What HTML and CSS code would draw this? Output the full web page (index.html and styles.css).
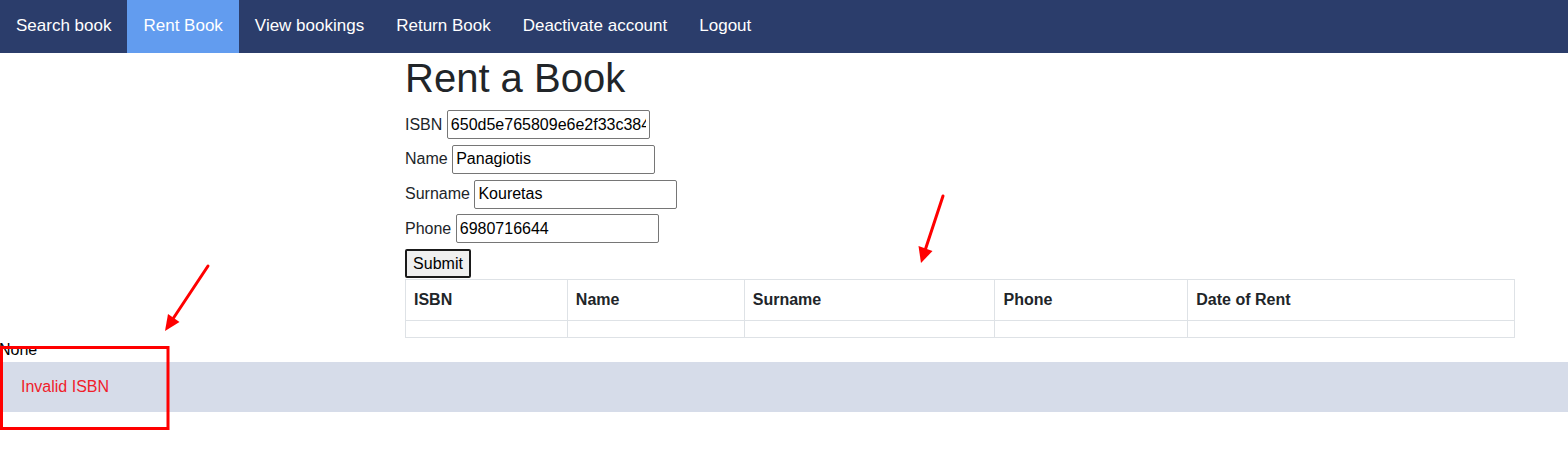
FILE: index.html
```html
<!DOCTYPE html>
<html>
<head>
<meta charset="utf-8">
<title>Rent a Book</title>
<link rel="stylesheet" href="styles.css">
</head>
<body>
<nav class="topnav">
  <a class="nav-link" href="#">Search book</a>
  <a class="nav-link active" href="#">Rent Book</a>
  <a class="nav-link" href="#">View bookings</a>
  <a class="nav-link" href="#">Return Book</a>
  <a class="nav-link" href="#">Deactivate account</a>
  <a class="nav-link" href="#">Logout</a>
</nav>
<main class="content">
  <h1 class="title">Rent a Book</h1>
  <form class="rent-form">
    <div class="field"><label>ISBN</label><input class="input" type="text" value="650d5e765809e6e2f33c384a"></div>
    <div class="field"><label>Name</label><input class="input" type="text" value="Panagiotis"></div>
    <div class="field"><label>Surname</label><input class="input" type="text" value="Kouretas"></div>
    <div class="field"><label>Phone</label><input class="input" type="text" value="6980716644"></div>
    <div class="field"><button class="submit" type="button">Submit</button></div>
  </form>
  <table class="rent-table">
    <thead>
      <tr>
        <th class="c1">ISBN</th>
        <th class="c2">Name</th>
        <th class="c3">Surname</th>
        <th class="c4">Phone</th>
        <th class="c5">Date of Rent</th>
      </tr>
    </thead>
    <tbody>
      <tr><td></td><td></td><td></td><td></td><td></td></tr>
    </tbody>
  </table>
</main>
<div class="none-text">None</div>
<div class="alert">Invalid ISBN</div>

<svg class="annotations" width="1568" height="459" viewBox="0 0 1568 459">
  <line x1="943" y1="196" x2="925.5" y2="249" stroke="#ff0000" stroke-width="3" stroke-linecap="round"/>
  <polygon points="921,263 918.5,246 932.5,251" fill="#ff0000"/>
  <line x1="208" y1="266" x2="173.5" y2="318" stroke="#ff0000" stroke-width="3" stroke-linecap="round"/>
  <polygon points="165,331 168,314 179.5,322" fill="#ff0000"/>
  <rect x="1.5" y="347.5" width="166.5" height="81" fill="none" stroke="#ff0000" stroke-width="3"/>
</svg>
</body>
</html>
```
FILE: styles.css
```css
* { box-sizing: border-box; }
html, body { margin: 0; padding: 0; }
body {
  font-family: "Liberation Sans", Arial, sans-serif;
  font-size: 16px;
  line-height: 1.5;
  color: #212529;
  background: #fff;
  width: 1568px;
  height: 459px;
  overflow: hidden;
  position: relative;
}
.topnav {
  display: flex;
  height: 53px;
  background: #2b3d6b;
}
.nav-link {
  display: block;
  padding: 0 16px 2px;
  line-height: 51px;
  font-size: 17px;
  color: #fff;
  text-decoration: none;
}
.nav-link.active { background: #629cef; }
.content {
  padding-left: 405px;
  padding-right: 53px;
}
.title {
  margin: 1px 0 8px;
  font-size: 40px;
  font-weight: 500;
  line-height: 1.2;
  color: #212529;
}
.rent-form {
  display: flex;
  flex-direction: column;
  gap: 5.75px;
}
.field {
  display: flex;
  align-items: center;
  height: 29px;
}
.field label { margin-right: 4.5px; }
.input {
  width: 203px;
  height: 29px;
  padding: 1px 3px;
  border: 1px solid #767676;
  border-radius: 2px;
  font-family: "Liberation Sans", Arial, sans-serif;
  font-size: 16px;
  color: #000;
  background: #fff;
}
.submit {
  height: 29px;
  width: 66px;
  padding: 0;
  border: 2px solid #1a1a1a;
  border-radius: 2px;
  background: #efefef;
  font-family: "Liberation Sans", Arial, sans-serif;
  font-size: 16px;
  color: #000;
}
.rent-table {
  width: 1110px;
  border-collapse: collapse;
  margin-top: 1px;
}
.rent-table th, .rent-table td {
  border: 1px solid #dee2e6;
  padding: 8px;
  text-align: left;
  font-weight: 700;
}
.c1 { width: 162px; }
.c2 { width: 177px; }
.c3 { width: 251px; }
.c4 { width: 193px; }
.c5 { width: 327px; }
.none-text {
  line-height: 24px;
  color: #000;
  margin-left: -1px;
}
.alert {
  padding: 12px 20px;
  border: 1px solid transparent;
  background: #d6dce9;
  color: #f0202a;
}
.annotations {
  position: absolute;
  left: 0;
  top: 0;
  pointer-events: none;
}
```
